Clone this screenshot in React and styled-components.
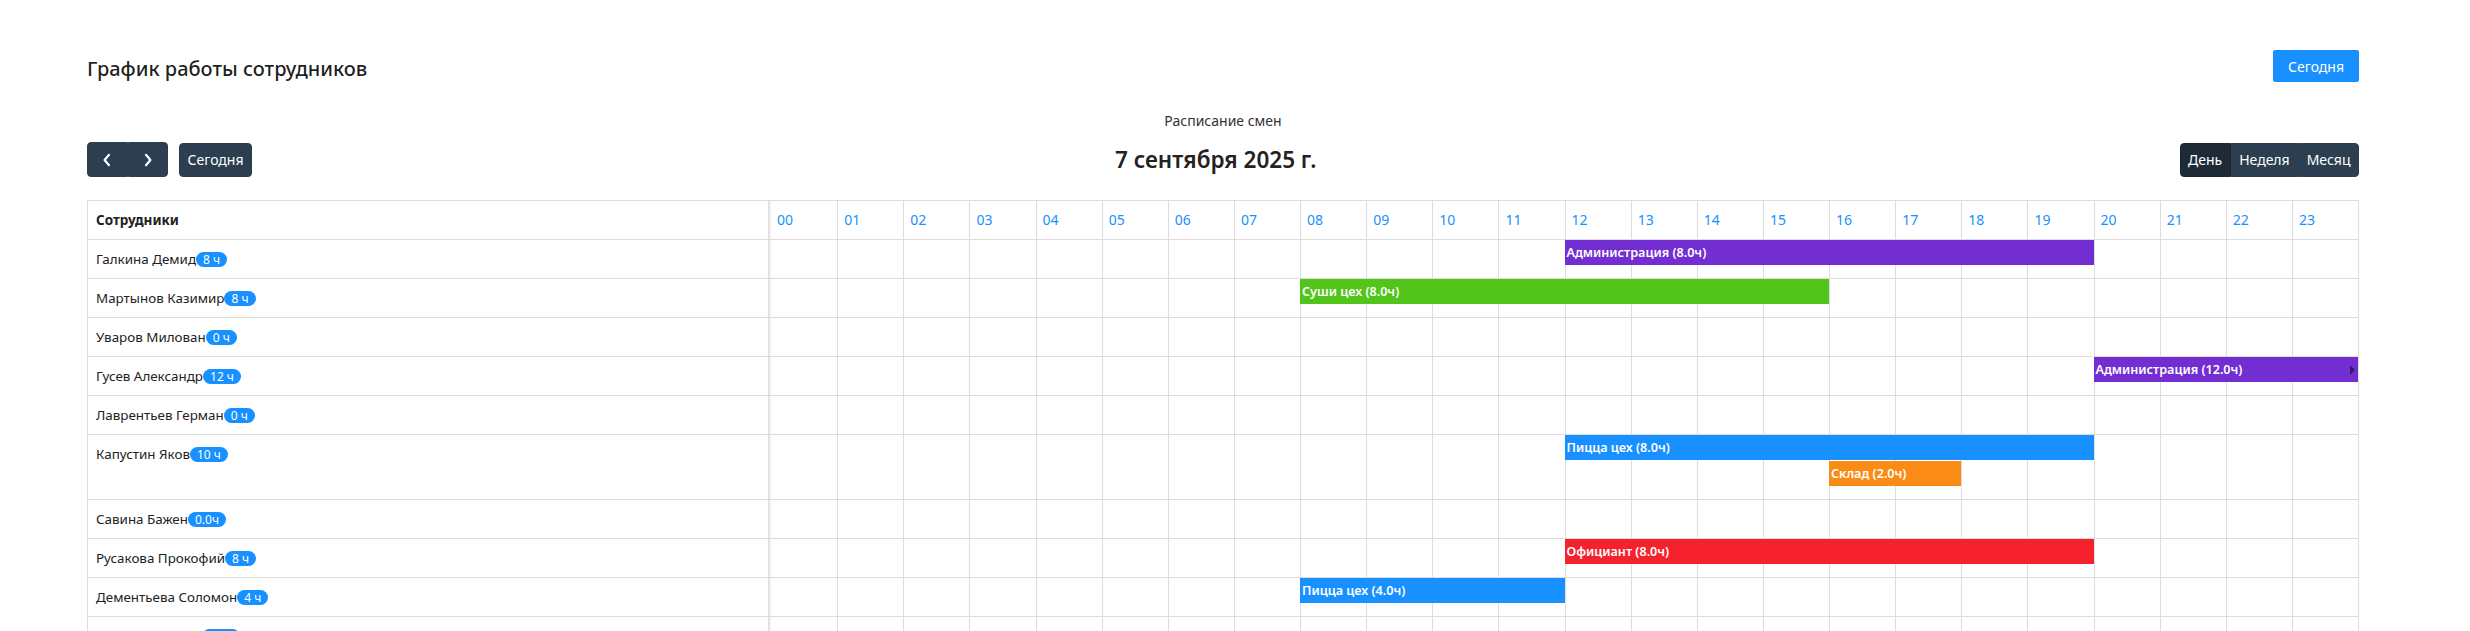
import React from 'react';
import styled, { createGlobalStyle } from 'styled-components';

const GlobalStyle = createGlobalStyle`
  * {
    box-sizing: border-box;
  }
  body {
    margin: 0;
    background: #fff;
    color: rgba(0, 0, 0, 0.88);
    font-family: 'Noto Sans', 'Open Sans', sans-serif;
  }
`;

const SHIFT_COLORS = {
  admin: '#722ed1',
  sushi: '#52c41a',
  pizza: '#1890ff',
  store: '#fa8c16',
  waiter: '#f5222d',
};

const HOURS = Array.from({ length: 24 }, (_, i) => String(i).padStart(2, '0'));

const employees = [
  { name: 'Галкина Демид', total: '8 ч', shifts: [{ title: 'Администрация (8.0ч)', kind: 'admin', start: 12, end: 20 }] },
  { name: 'Мартынов Казимир', total: '8 ч', shifts: [{ title: 'Суши цех (8.0ч)', kind: 'sushi', start: 8, end: 16 }] },
  { name: 'Уваров Милован', total: '0 ч', shifts: [] },
  { name: 'Гусев Александр', total: '12 ч', shifts: [{ title: 'Администрация (12.0ч)', kind: 'admin', start: 20, end: 24, continues: true }] },
  { name: 'Лаврентьев Герман', total: '0 ч', shifts: [] },
  {
    name: 'Капустин Яков',
    total: '10 ч',
    shifts: [
      { title: 'Пицца цех (8.0ч)', kind: 'pizza', start: 12, end: 20 },
      { title: 'Склад (2.0ч)', kind: 'store', start: 16, end: 18, lane: 1 },
    ],
  },
  { name: 'Савина Бажен', total: '0.0ч', shifts: [] },
  { name: 'Русакова Прокофий', total: '8 ч', shifts: [{ title: 'Официант (8.0ч)', kind: 'waiter', start: 12, end: 20 }] },
  { name: 'Дементьева Соломон', total: '4 ч', shifts: [{ title: 'Пицца цех (4.0ч)', kind: 'pizza', start: 8, end: 12 }] },
  { name: 'Никитина Савва', total: '0.0ч', shifts: [] },
  { name: 'Орлова Всеволод', total: '0 ч', shifts: [] },
];

const Page = styled.div`
  padding: 50px 111px 40px 87px;
`;

const TopBar = styled.div`
  display: flex;
  justify-content: space-between;
  align-items: flex-start;
`;

const PageTitle = styled.h1`
  margin: 0;
  padding-top: 3px;
  font-size: 20px;
  font-weight: 500;
  line-height: 32px;
  color: rgba(0, 0, 0, 0.88);
`;

const PrimaryButton = styled.button`
  height: 32px;
  padding: 0 15px;
  border: none;
  border-radius: 2px;
  background: #1890ff;
  color: #fff;
  font-family: inherit;
  font-size: 14px;
  cursor: pointer;
`;

const Caption = styled.div`
  margin-top: 26px;
  text-align: center;
  font-size: 14px;
  line-height: 20px;
  color: #333;
`;

const Toolbar = styled.div`
  margin-top: 11px;
  display: flex;
  justify-content: space-between;
  align-items: center;
`;

const ToolGroup = styled.div`
  display: flex;
  align-items: center;
  gap: ${p => (p.$gap ? '11px' : '0')};
`;

const ButtonGroup = styled.div`
  display: flex;

  & > button {
    border-radius: 0;
  }
  & > button:first-child {
    border-radius: 4px 0 0 4px;
  }
  & > button:last-child {
    border-radius: 0 4px 4px 0;
  }
`;

const ToolButton = styled.button`
  display: inline-flex;
  align-items: center;
  justify-content: center;
  height: ${p => (p.$icon ? '35px' : '34px')};
  min-width: ${p => (p.$icon ? '40.5px' : '0')};
  padding: 0 7.5px;
  border: 1px solid ${p => (p.$active ? '#1a252f' : '#2c3e50')};
  border-radius: 4px;
  background: ${p => (p.$active ? '#1e2b37' : '#2c3e50')};
  color: #fff;
  font-family: inherit;
  font-size: 14px;
  line-height: 21px;
  cursor: pointer;
`;

const DateTitle = styled.h2`
  margin: 0;
  font-size: 22.5px;
  font-weight: 600;
  line-height: 34px;
  color: #222;
`;

const Table = styled.div`
  margin-top: 23px;
  border: 1px solid #ddd;
`;

const Row = styled.div`
  display: grid;
  grid-template-columns: 680px 3px minmax(0, 1fr);
  border-bottom: 1px solid #ddd;

  &:last-child {
    border-bottom: none;
  }
`;

const NameHead = styled.div`
  padding: 0 8px;
  font-size: 13.5px;
  font-weight: 700;
  line-height: 38px;
  color: #222;
`;

const Divider = styled.div`
  border-left: 1px solid #ddd;
  background: #eee;
`;

const HourHead = styled.div`
  display: grid;
  grid-template-columns: repeat(24, minmax(0, 1fr));
`;

const HourLabel = styled.div`
  padding-left: 6px;
  border-left: ${p => (p.$first ? 'none' : '1px solid #ddd')};
  font-size: 14px;
  line-height: 38px;
  color: #1890ff;
`;

const NameCell = styled.div`
  display: flex;
  align-items: center;
  align-self: start;
  padding: 9px 8px 0;
  font-size: 13.4px;
  line-height: 20px;
  color: #222;
`;

const Badge = styled.span`
  display: inline-block;
  height: 15px;
  padding: 0 7px;
  border-radius: 8px;
  background: #1890ff;
  color: #fff;
  font-size: 12px;
  line-height: 15px;
  white-space: nowrap;
`;

const Lane = styled.div`
  display: grid;
  grid-template-columns: repeat(24, minmax(0, 1fr));
  grid-template-rows: repeat(${p => p.$lanes}, 26px) 12px;
`;

const Slot = styled.div`
  grid-row: 1 / -1;
  grid-column: ${p => p.$index + 1};
  border-left: ${p => (p.$index === 0 ? 'none' : '1px solid #ddd')};
`;

const Shift = styled.div`
  grid-row: ${p => p.$lane + 1};
  grid-column: ${p => p.$start + 1} / ${p => p.$end + 1};
  z-index: 1;
  display: flex;
  align-items: center;
  justify-content: space-between;
  height: 25px;
  padding: 0 2px;
  background: ${p => p.$color};
  color: #fff;
  font-size: 12.6px;
  font-weight: 600;
  white-space: nowrap;
  overflow: hidden;

  ${p =>
    p.$continues &&
    `
    &::after {
      content: '';
      border: 5px solid rgba(0, 0, 0, 0.5);
      border-top-color: transparent;
      border-bottom-color: transparent;
      border-right: 0;
      margin-right: 1px;
    }
  `}
`;

const Chevron = ({ dir }) => (
  <svg width="10" height="14" viewBox="0 0 10 14" fill="none">
    <polyline
      points={dir === 'left' ? '7,1.8 2.6,7 7,12.2' : '3,1.8 7.4,7 3,12.2'}
      stroke="#fff"
      strokeWidth="2.2"
      strokeLinecap="round"
      strokeLinejoin="round"
    />
  </svg>
);

const EmployeeRow = ({ employee }) => {
  const lanes = Math.max(1, ...employee.shifts.map(s => (s.lane || 0) + 1));
  return (
    <Row>
      <NameCell>
        {employee.name}
        <Badge>{employee.total}</Badge>
      </NameCell>
      <Divider />
      <Lane $lanes={lanes}>
        {HOURS.map((h, i) => (
          <Slot key={h} $index={i} />
        ))}
        {employee.shifts.map(shift => (
          <Shift
            key={shift.title}
            $lane={shift.lane || 0}
            $start={shift.start}
            $end={shift.end}
            $color={SHIFT_COLORS[shift.kind]}
            $continues={shift.continues}
          >
            {shift.title}
          </Shift>
        ))}
      </Lane>
    </Row>
  );
};

const App = () => (
  <Page>
    <GlobalStyle />
    <TopBar>
      <PageTitle>График работы сотрудников</PageTitle>
      <PrimaryButton>Сегодня</PrimaryButton>
    </TopBar>

    <Caption>Расписание смен</Caption>

    <Toolbar>
      <ToolGroup $gap>
        <ButtonGroup>
          <ToolButton $icon aria-label="prev">
            <Chevron dir="left" />
          </ToolButton>
          <ToolButton $icon aria-label="next">
            <Chevron dir="right" />
          </ToolButton>
        </ButtonGroup>
        <ToolButton>Сегодня</ToolButton>
      </ToolGroup>
      <DateTitle>7 сентября 2025 г.</DateTitle>
      <ButtonGroup>
        <ToolButton $active>День</ToolButton>
        <ToolButton>Неделя</ToolButton>
        <ToolButton>Месяц</ToolButton>
      </ButtonGroup>
    </Toolbar>

    <Table>
      <Row>
        <NameHead>Сотрудники</NameHead>
        <Divider />
        <HourHead>
          {HOURS.map((h, i) => (
            <HourLabel key={h} $first={i === 0}>
              {h}
            </HourLabel>
          ))}
        </HourHead>
      </Row>
      {employees.map(e => (
        <EmployeeRow key={e.name} employee={e} />
      ))}
    </Table>
  </Page>
);

export default App;
